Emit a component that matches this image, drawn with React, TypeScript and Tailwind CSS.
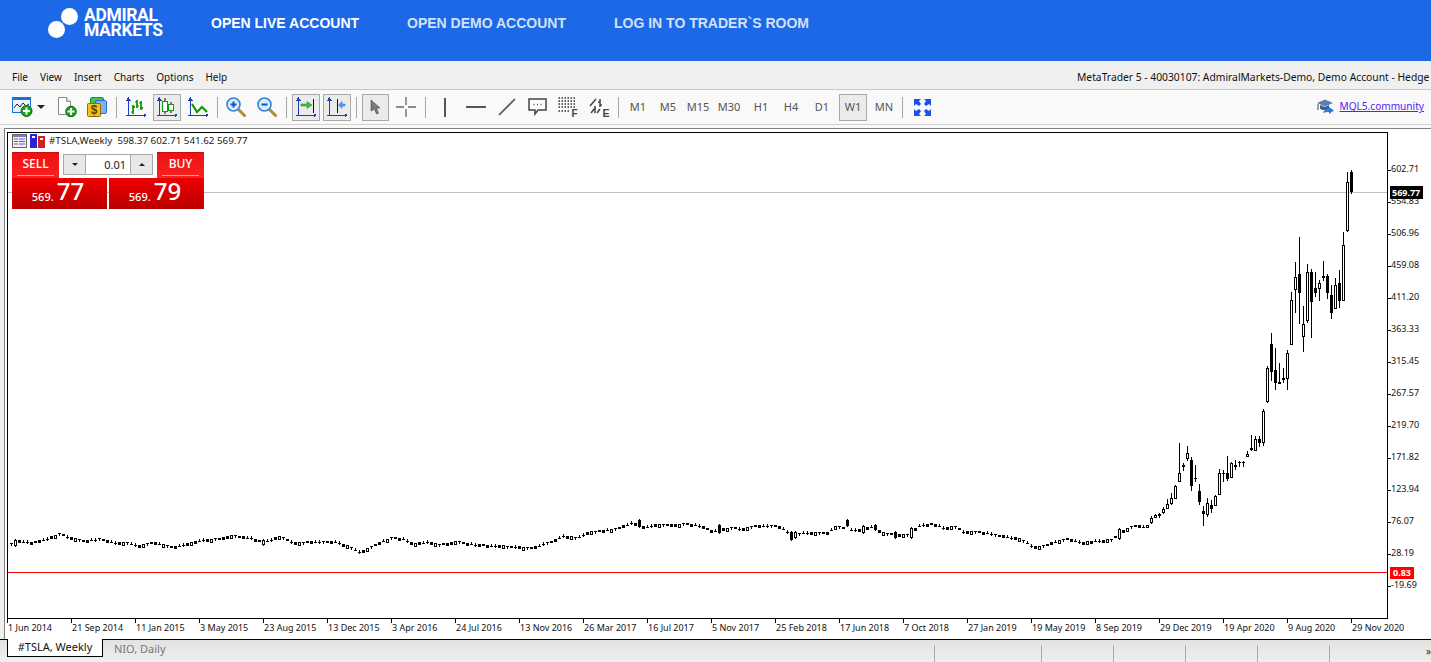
import type { ReactNode } from "react";

// [col, wickTop, wickBottom, bodyTop, bodyBottom, filled]
type Candle = [number, number, number, number, number, number];

const bigCandles: Candle[] = [
  [1147, 525, 528, 525, 528, 0],
  [1151, 516, 524, 518, 523, 0],
  [1155, 514, 518, 515, 518, 0],
  [1159, 513, 518, 514, 516, 1],
  [1163, 507, 514, 509, 513, 0],
  [1167, 499, 509, 504, 509, 0],
  [1171, 493, 505, 498, 504, 0],
  [1175, 485, 499, 486, 499, 0],
  [1179, 443, 482, 473, 482, 0],
  [1183, 463, 471, 465, 467, 1],
  [1187, 446, 461, 453, 459, 0],
  [1191, 457, 491, 460, 486, 1],
  [1195, 465, 482, 478, 479, 1],
  [1199, 484, 505, 491, 502, 1],
  [1203, 506, 526, 511, 514, 1],
  [1207, 498, 517, 503, 515, 0],
  [1211, 500, 513, 505, 509, 1],
  [1215, 495, 506, 496, 506, 0],
  [1219, 469, 495, 473, 495, 0],
  [1223, 470, 482, 473, 474, 1],
  [1227, 456, 481, 473, 479, 1],
  [1231, 462, 478, 463, 478, 0],
  [1235, 460, 470, 465, 467, 1],
  [1239, 461, 467, 462, 463, 1],
  [1243, 461, 467, 462, 463, 1],
  [1247, 451, 457, 454, 457, 0],
  [1251, 435, 451, 448, 450, 1],
  [1255, 436, 451, 439, 451, 0],
  [1259, 436, 447, 439, 443, 1],
  [1263, 409, 446, 411, 443, 0],
  [1267, 366, 403, 368, 402, 0],
  [1271, 333, 381, 344, 372, 1],
  [1275, 348, 390, 370, 383, 1],
  [1279, 363, 384, 382, 384, 0],
  [1283, 368, 383, 378, 380, 1],
  [1287, 350, 390, 353, 379, 0],
  [1291, 292, 345, 300, 345, 0],
  [1295, 262, 313, 277, 290, 0],
  [1299, 237, 324, 274, 293, 1],
  [1303, 306, 352, 324, 337, 0],
  [1307, 264, 323, 272, 321, 0],
  [1311, 269, 338, 272, 302, 1],
  [1315, 272, 297, 288, 293, 1],
  [1319, 280, 301, 283, 289, 0],
  [1323, 261, 281, 276, 278, 1],
  [1327, 274, 299, 276, 293, 1],
  [1331, 285, 319, 295, 313, 1],
  [1335, 278, 309, 285, 309, 0],
  [1339, 270, 308, 283, 301, 1],
  [1343, 232, 301, 245, 301, 0],
  [1347, 172, 232, 182, 231, 0],
  [1351, 170, 194, 172, 192, 1],
];

const path: [number, number][] = [
  [8, 545], [20, 541], [30, 543], [43, 540], [60, 534], [70, 538], [83, 541], [100, 539], [117, 543], [127, 543],
  [137, 546], [153, 543], [173, 547], [183, 545], [197, 541], [220, 539], [233, 536], [250, 538], [263, 542],
  [280, 537], [293, 543], [317, 542], [337, 542], [360, 552], [380, 542], [392, 538], [403, 539], [412, 544],
  [427, 542], [440, 545], [457, 542], [477, 545], [513, 547], [532, 548], [553, 541], [562, 536], [577, 538],
  [587, 533], [600, 531], [617, 529], [633, 522], [640, 528], [657, 525], [677, 525], [687, 524], [700, 526],
  [712, 531], [730, 528], [743, 529], [757, 526], [777, 526], [793, 535], [803, 533], [827, 533], [837, 526],
  [850, 530], [863, 530], [870, 526], [883, 533], [897, 535], [910, 535], [917, 526], [933, 524], [943, 528],
  [957, 527], [963, 532], [980, 532], [1000, 536], [1020, 539], [1033, 547], [1040, 547], [1057, 541],
  [1067, 539], [1083, 543], [1097, 541], [1112, 540], [1119, 533], [1133, 526], [1147, 527],
];

const tallOnes: Record<number, [number, number, number]> = {
  15: [540, 546, 0],
  263: [540, 545, 0],
  639: [520, 527, 1],
  719: [525, 533, 1],
  791: [532, 540, 1],
  795: [532, 538, 0],
  847: [520, 526, 1],
  863: [526, 533, 0],
  875: [525, 530, 1],
  895: [532, 538, 1],
  911: [528, 538, 0],
  1119: [529, 539, 0],
};

function yAt(x: number) {
  for (let i = 1; i < path.length; i++) {
    if (x <= path[i][0]) {
      const [x0, y0] = path[i - 1];
      const [x1, y1] = path[i];
      return Math.round(y0 + ((y1 - y0) * (x - x0)) / (x1 - x0));
    }
  }
  return 527;
}

function smallCandles() {
  const out: Candle[] = [];
  for (let x = 11; x < 1147; x += 4) {
    const y = yAt(x);
    const tall = tallOnes[x];
    if (tall) {
      out.push([x, tall[0] - 1, tall[1] + 1, tall[0], tall[1], tall[2]]);
      continue;
    }
    const kind = ((x >> 2) * 37 + (x >> 5) * 11) % 7;
    if (kind === 0 || kind === 1) out.push([x, y - 1, y + 2, y - 1, y + 2, 1]);
    else if (kind === 2) out.push([x, y - 1, y + 3, y - 1, y + 3, 0]);
    else if (kind === 3) out.push([x, y - 2, y + 1, y, y + 1, 1]);
    else if (kind === 4) out.push([x, y - 1, y + 2, y - 1, y, 1]);
    else if (kind === 5) out.push([x, y - 2, y + 2, y, y + 1, 1]);
    else out.push([x, y - 1, y + 1, y - 1, y + 1, 1]);
  }
  return out;
}

const candles = [...smallCandles(), ...bigCandles];

const priceLabels = ["602.71", "554.83", "506.96", "459.08", "411.20", "363.33", "315.45", "267.57", "219.70", "171.82", "123.94", "76.07", "28.19", "-19.69"];
const timeLabels = ["1 Jun 2014", "21 Sep 2014", "11 Jan 2015", "3 May 2015", "23 Aug 2015", "13 Dec 2015", "3 Apr 2016", "24 Jul 2016", "13 Nov 2016", "26 Mar 2017", "16 Jul 2017", "5 Nov 2017", "25 Feb 2018", "17 Jun 2018", "7 Oct 2018", "27 Jan 2019", "19 May 2019", "8 Sep 2019", "29 Dec 2019", "19 Apr 2020", "9 Aug 2020", "29 Nov 2020"];

const navy = "#1b3fb8";
const green = "#0c9a0c";

function PriceChart() {
  return (
    <svg width="1426" height="510" viewBox="5 129 1426 510" className="block font-['Noto_Sans',sans-serif] text-[9px]">
      <g shapeRendering="crispEdges">
        <rect x="7" y="132" width="1380" height="486" fill="none" stroke="#000" strokeWidth="1" transform="translate(0.5 0.5)" />
        <rect x="8" y="192" width="1379" height="1" fill="#c0c0c0" />
        <rect x="8" y="572" width="1379" height="1" fill="#ff0000" />
        {priceLabels.map((_, i) => (
          <rect key={i} x="1388" y={170 + i * 32} width="3" height="1" fill="#000" />
        ))}
        {timeLabels.map((_, i) => (
          <rect key={i} x={7 + i * 64} y="619" width="1" height="4" fill="#000" />
        ))}
        {candles.map(([x, top, bottom, bodyTop, bodyBottom, filled], i) => (
          <g key={i}>
            <rect x={x} y={top} width="1" height={bottom - top} fill="#000" />
            {bodyBottom - bodyTop < 3 || filled ? (
              <rect x={x - 1} y={bodyTop} width="3" height={Math.max(bodyBottom - bodyTop, 1)} fill="#000" />
            ) : (
              <rect x={x - 0.5} y={bodyTop + 0.5} width="2" height={bodyBottom - bodyTop - 1} fill="#fff" stroke="#000" strokeWidth="1" />
            )}
          </g>
        ))}
        <rect x="1390" y="186" width="33" height="13" fill="#000" />
        <rect x="1390" y="567" width="24" height="12" fill="#ff0000" />
      </g>
      {priceLabels.map((label, i) => (
        <text key={label} x="1391" y={172 + i * 32} fill="#111">
          {label}
        </text>
      ))}
      <text x="1392" y="196" fill="#fff" fontWeight="700">569.77</text>
      <text x="1393" y="576" fill="#fff" fontWeight="700">0.83</text>
      {timeLabels.map((label, i) => (
        <text key={label} x={8 + i * 64} y="631" fill="#111">
          {label}
        </text>
      ))}
    </svg>
  );
}

function Axes() {
  return (
    <g stroke={navy} fill="none" shapeRendering="crispEdges">
      <path d="M2.5 1v18M0 18.5h20" />
      <path d="M1 3l1.5-2 1.5 2zM18 17l2 1.5-2 1.5z" fill={navy} />
    </g>
  );
}

const BarsIcon = () => (
  <svg width="20" height="20" viewBox="0 0 20 20">
    <Axes />
    <path d="M7 8v9M5.500 15H7M7 10h2M11 3v8M9.500 5H11M11 9h1.500M15 4v9M13.500 6H15M15 11h2" stroke={green} strokeWidth="1.800" fill="none" />
  </svg>
);

const CandleIcon = () => (
  <svg width="20" height="20" viewBox="0 0 20 20">
    <Axes />
    <path d="M8 1v16M14 5v11" stroke="#111" fill="none" />
    <rect x="5.500" y="4.500" width="5" height="10" fill="#fff" stroke={green} />
    <rect x="11.500" y="7.500" width="5" height="6" fill="#fff" stroke={green} />
  </svg>
);

const LineIcon = () => (
  <svg width="20" height="20" viewBox="0 0 20 20">
    <Axes />
    <path d="M4 7l5 8 5-5 5 5" stroke={green} strokeWidth="2.200" fill="none" />
  </svg>
);

const NewChartIcon = () => (
  <svg width="21" height="20" viewBox="0 0 21 20">
    <rect x="0.500" y="0.500" width="18" height="15" fill="#e8f2fd" stroke="#1d6fd6" />
    <rect x="1" y="1" width="17" height="2" fill="#1d6fd6" />
    <path d="M2 11l3-4 3 3 3-4 3 3 3-2" stroke="#222" fill="none" />
    <circle cx="14.500" cy="14" r="5.500" fill="#19a319" stroke="#0b6b0b" />
    <path d="M14.500 10.500v7M11 14h7" stroke="#fff" strokeWidth="2" />
  </svg>
);

const DocIcon = () => (
  <svg width="20" height="20" viewBox="0 0 20 20">
    <path d="M1.500 0.500h8l4 4v13h-12z" fill="#fff" stroke="#8a8a8a" />
    <path d="M9.500 0.500v4h4" fill="#e4e4e4" stroke="#8a8a8a" />
    <circle cx="14" cy="14.500" r="5.300" fill="#19a319" stroke="#0b6b0b" />
    <path d="M14 11v7M10.500 14.500h7" stroke="#fff" strokeWidth="2" />
  </svg>
);

const MoneyIcon = () => (
  <svg width="21" height="20" viewBox="0 0 21 20">
    <rect x="3.500" y="0.500" width="13" height="11" rx="1.500" fill="#3fbf5f" stroke="#1f8f3f" />
    <rect x="8.500" y="3.500" width="11" height="13" rx="1.500" fill="#7fb2ee" stroke="#2a6fc8" />
    <rect x="0.500" y="6.500" width="13" height="13" rx="1" fill="#f4c21b" stroke="#8f6d05" />
    <text x="7" y="17" textAnchor="middle" fontSize="12" fontWeight="700" fill="#5a4300" fontFamily="Liberation Sans">$</text>
  </svg>
);

const Magnifier = ({ plus }: { plus?: boolean }) => (
  <svg width="20" height="20" viewBox="0 0 20 20">
    <path d="M12 12l6.500 6.500" stroke="#b48a35" strokeWidth="3" strokeLinecap="round" />
    <circle cx="7.500" cy="7.500" r="6.500" fill="#d6ecff" stroke="#2f86d8" strokeWidth="1.600" />
    <path d={plus ? "M7.500 4.500v6M4.500 7.500h6" : "M4.500 7.500h6"} stroke="#1752b8" strokeWidth="2" />
  </svg>
);

const ScrollIcon = () => (
  <svg width="20" height="20" viewBox="0 0 20 20">
    <Axes />
    <path d="M17.500 2v14" stroke="#111" />
    <path d="M5 7h6V4.500l5 3.500-5 3.500V9H5z" fill="#35c235" stroke="#1a8f1a" strokeWidth="0.500" />
  </svg>
);

const ShiftIcon = () => (
  <svg width="20" height="20" viewBox="0 0 20 20">
    <Axes />
    <path d="M10.500 2v14" stroke="#111" />
    <path d="M18 7h-3V4.500L11.500 8l3.500 3.500V9h3z" fill="#4f9cf2" stroke="#2a6fc8" strokeWidth="0.500" />
  </svg>
);

const CursorIcon = () => (
  <svg width="12" height="16" viewBox="0 0 12 16">
    <path d="M1 1l9 8H6.500l2 5-2 1-2-5L1 12z" fill="#7a7a7a" stroke="#444" strokeWidth="0.600" />
  </svg>
);

const CrossIcon = () => (
  <svg width="20" height="20" viewBox="0 0 20 20">
    <path d="M0 10h8M12 10h8M10 0v8M10 12v8" stroke="#666" strokeWidth="1.300" />
  </svg>
);

const VLineIcon = () => <div className="w-[2px] h-[19px] bg-[#555]" />;
const HLineIcon = () => <div className="w-[20px] h-[2px] bg-[#555]" />;

const TrendIcon = () => (
  <svg width="18" height="18" viewBox="0 0 18 18">
    <path d="M1 17L17 1" stroke="#555" strokeWidth="1.700" />
  </svg>
);

const CommentIcon = () => (
  <svg width="19" height="18" viewBox="0 0 19 18">
    <path d="M1 1h17v11h-8l-3 4v-4H1z" fill="#fff" stroke="#444" strokeWidth="1.500" />
    <path d="M5.500 6.500h1M9 6.500h1M12.500 6.500h1" stroke="#444" strokeWidth="1.500" />
  </svg>
);

const GridFIcon = () => (
  <svg width="20" height="20" viewBox="0 0 20 20">
    <path d="M0.500 1h18M0.500 4h18M0.500 7h18M0.500 10h18M0.500 14h11" stroke="#333" strokeWidth="1.500" strokeDasharray="1.500 1.500" />
    <text x="13.500" y="19.500" fontSize="10" fontWeight="700" fill="#444" fontFamily="Liberation Sans">F</text>
  </svg>
);

const GridEIcon = () => (
  <svg width="21" height="20" viewBox="0 0 21 20">
    <path d="M1 9l6-7M2 16l4-5M11 12l-3 4" stroke="#444" strokeWidth="1.500" />
    <path d="M11 2v8M9 5h2M11 8h2M6 9v7" stroke="#444" strokeWidth="1.500" />
    <text x="13.500" y="19.500" fontSize="10.500" fontWeight="700" fill="#444" fontFamily="Liberation Sans">E</text>
  </svg>
);

const FullscreenIcon = () => (
  <svg width="17" height="17" viewBox="0 0 17 17">
    <path d="M0 0h7L5 2l2 3-2 2-3-2-2 2zM17 0h-7l2 2-2 3 2 2 3-2 2 2zM0 17h7l-2-2 2-3-2-2-3 2-2-2zM17 17h-7l2-2-2-3 2-2 3 2 2-2z" fill="#1c4ff0" />
  </svg>
);

const CapIcon = () => (
  <svg width="17" height="16" viewBox="0 0 17 16">
    <path d="M0 4l8-3.500L16 4 8 7.500z" fill="#5b7fb0" />
    <path d="M3 6v3.500c2 2 7 2 9 0V6L8 8z" fill="#3c5f92" />
    <path d="M1 5v6" stroke="#444" />
    <path d="M6 14c1-3 3-4 6-4V8l5 3.500-5 3.500v-2c-2 0-4 0-6 1z" fill="#1f7fe0" />
  </svg>
);

function Sep({ className }: { className: string }) {
  return <div className={`w-[1px] h-[21px] bg-[#a8a8a8] shrink-0 ${className}`} />;
}

function Btn({ className, active, children }: { className: string; active?: boolean; children: ReactNode }) {
  return (
    <div
      className={`h-[27px] shrink-0 flex items-center justify-center text-[11px] text-[#555] ${active ? "bg-[#ebebeb] border border-[#a8a8a8]" : ""} ${className}`}
    >
      {children}
    </div>
  );
}

function Toolbar() {
  return (
    <div className="h-[35px] bg-[#f9f9f9] border-b border-[#d2d2d2] pl-[7px] pr-[7px] flex items-center">
      <Btn className="w-[30px]"><NewChartIcon /></Btn>
      <div className="w-[8px] shrink-0 flex justify-center">
        <div className="border-x-[4px] border-x-transparent border-t-[4px] border-t-[#222]" />
      </div>
      <Btn className="w-[30px] ml-[7px]"><DocIcon /></Btn>
      <Btn className="w-[31px]"><MoneyIcon /></Btn>
      <Sep className="ml-[3px]" />
      <Btn className="w-[30px] ml-[4px]"><BarsIcon /></Btn>
      <Btn active className="w-[28px] ml-[2px]"><CandleIcon /></Btn>
      <Btn className="w-[30px] ml-[2px]"><LineIcon /></Btn>
      <Sep className="ml-[4px]" />
      <Btn className="w-[30px] ml-[3px]"><Magnifier plus /></Btn>
      <Btn className="w-[30px] ml-[1px]"><Magnifier /></Btn>
      <Sep className="ml-[4px]" />
      <Btn active className="w-[28px] ml-[5px]"><ScrollIcon /></Btn>
      <Btn active className="w-[28px] ml-[3px]"><ShiftIcon /></Btn>
      <Sep className="ml-[5px]" />
      <Btn active className="w-[27px] ml-[5px]"><CursorIcon /></Btn>
      <Btn className="w-[30px] ml-[2px]"><CrossIcon /></Btn>
      <Sep className="ml-[4px]" />
      <Btn className="w-[30px] ml-[4px]"><VLineIcon /></Btn>
      <Btn className="w-[30px] ml-[1px]"><HLineIcon /></Btn>
      <Btn className="w-[30px] ml-[1px]"><TrendIcon /></Btn>
      <Btn className="w-[30px]"><CommentIcon /></Btn>
      <Btn className="w-[30px] ml-[1px]"><GridFIcon /></Btn>
      <Btn className="w-[30px] ml-[1px]"><GridEIcon /></Btn>
      <Sep className="ml-[4px]" />
      <Btn className="w-[30px] ml-[4px]">M1</Btn>
      <Btn className="w-[30px]">M5</Btn>
      <Btn className="w-[30px]">M15</Btn>
      <Btn className="w-[30px] ml-[1px]">M30</Btn>
      <Btn className="w-[30px] ml-[2px]">H1</Btn>
      <Btn className="w-[30px]">H4</Btn>
      <Btn className="w-[30px] ml-[1px]">D1</Btn>
      <Btn active className="w-[28px] ml-[2px]">W1</Btn>
      <Btn className="w-[30px] ml-[2px]">MN</Btn>
      <Sep className="ml-[3px]" />
      <Btn className="w-[30px] ml-[4px]"><FullscreenIcon /></Btn>
      <div className="ml-auto flex items-center gap-[5px]">
        <CapIcon />
        <a className="text-[10.100px] text-[#5a1cf5] underline">MQL5.community</a>
      </div>
    </div>
  );
}

function PriceBlock({ small, big }: { small: string; big: string }) {
  return (
    <div className="w-[95px] bg-gradient-to-b from-[#ee0000] to-[#bb0000] flex items-center justify-center gap-[3px] pr-[3px]">
      <span className="text-[11px] font-medium mt-[8px]">{small}</span>
      <span className="text-[24px] font-medium leading-[24px] -mt-[5px]">{big}</span>
    </div>
  );
}

function TradeLabel({ text }: { text: string }) {
  return (
    <div className="w-[47px] bg-gradient-to-b from-[#f01010] to-[#f82020] border-t border-[#c01010] flex flex-col items-center">
      <span className="text-[12px] font-medium leading-[22px]">{text}</span>
      <div className="w-[37px] h-[1px] bg-[#ff9a9a]" />
    </div>
  );
}

function TradePanel() {
  return (
    <div className="absolute left-[7px] top-[23px] w-[192px] text-white">
      <div className="flex h-[26px]">
        <TradeLabel text="SELL" />
        <div className="w-[98px] bg-white flex items-center px-[4px] pb-[1px] text-[#222]">
          <div className="w-[23px] h-[21px] bg-[#e8e8e8] border border-[#a8a8a8] flex items-center justify-center">
            <div className="border-x-[3px] border-x-transparent border-t-[3px] border-t-[#222]" />
          </div>
          <div className="w-[44px] h-[21px] border-y border-[#a8a8a8] text-[11px] leading-[19px] text-right pr-[4px]">0.01</div>
          <div className="w-[23px] h-[21px] bg-[#e8e8e8] border border-[#a8a8a8] flex items-center justify-center">
            <div className="border-x-[3px] border-x-transparent border-b-[3px] border-b-[#222]" />
          </div>
        </div>
        <TradeLabel text="BUY" />
      </div>
      <div className="flex gap-[2px] h-[31px]">
        <PriceBlock small="569." big="77" />
        <PriceBlock small="569." big="79" />
      </div>
    </div>
  );
}

function SymbolLine() {
  return (
    <div className="absolute left-[7px] top-[5px] flex items-center h-[14px] text-[9.800px] text-[#222]">
      <svg width="15" height="14" viewBox="0 0 15 14">
        <rect x="0.500" y="0.500" width="14" height="13" fill="#eef" stroke="#666" />
        <rect x="1" y="1" width="13" height="2" fill="#7a7ad0" />
        <path d="M2 5h4M2 7.500h4M2 10h4" stroke="#d04040" strokeWidth="1.200" />
        <path d="M7 5h6M7 7.500h6M7 10h6" stroke="#5a5ad0" strokeWidth="1.200" />
      </svg>
      <svg width="15" height="14" viewBox="0 0 15 14" className="ml-[3px]">
        <rect x="0" y="0" width="7" height="14" fill="#2a20d8" />
        <rect x="8" y="2" width="7" height="12" fill="#d02020" />
        <rect x="2" y="2" width="3" height="2" fill="#fff" />
        <rect x="10" y="4" width="3" height="2" fill="#fff" />
      </svg>
      <span className="ml-[4px] whitespace-pre">#TSLA,Weekly  598.37 602.71 541.62 569.77</span>
    </div>
  );
}

export default function App() {
  return (
    <div className="w-[1431px] h-[662px] overflow-hidden flex flex-col bg-[#f0f0f0] font-['Noto_Sans',sans-serif]">
      <header className="h-[61px] shrink-0 bg-[#1d68e7] flex items-start">
        <div className="relative w-[211px] h-[61px] shrink-0 pl-[48px] pt-[8px] flex">
          <div className="w-[36px] h-[32px] relative shrink-0">
            <div className="absolute right-[6px] top-0 w-[17px] h-[17px] rounded-full bg-white" />
            <div className="absolute left-0 top-[13px] w-[17px] h-[17px] rounded-full bg-white" />
          </div>
          <div className="font-['Roboto',sans-serif] font-bold text-white text-[17.500px] leading-[15px] tracking-[-0.35px]">
            ADMIRAL
            <br />
            MARKETS
          </div>
        </div>
        <nav className="flex gap-[48px] h-[46px] items-center font-['Liberation_Sans',sans-serif] font-bold text-[14px] whitespace-nowrap">
          <a className="text-white">OPEN LIVE ACCOUNT</a>
          <a className="text-[#d2e1fa]">OPEN DEMO ACCOUNT</a>
          <a className="text-[#d2e1fa]">LOG IN TO TRADER`S ROOM</a>
        </nav>
      </header>

      <div className="h-[29px] shrink-0 bg-[#f0f0f0] border-b border-[#c8c8c8] flex items-center pl-[12px] pt-[5px] text-[10px] text-[#111] gap-[12px]">
        <span>File</span>
        <span>View</span>
        <span>Insert</span>
        <span>Charts</span>
        <span>Options</span>
        <span>Help</span>
        <span className="ml-auto w-[354px] text-[10.300px] overflow-hidden whitespace-nowrap">MetaTrader 5 - 40030107: AdmiralMarkets-Demo, Demo Account - Hedge</span>
      </div>

      <Toolbar />
      <div className="h-[3px] shrink-0 bg-[#f9f9f9]" />

      <section className="relative h-[511px] shrink-0 ml-[4px] bg-white border-l border-t border-[#808080]">
        <PriceChart />
        <SymbolLine />
        <TradePanel />
      </section>

      <footer className="h-[23px] shrink-0 border-t border-black bg-gradient-to-b from-[#e2e2e2] to-[#efefef] flex items-start relative pl-[7px] text-[11px]">
        <div className="w-[96px] h-[18px] -mt-[1px] bg-white border-x border-b border-black flex items-center justify-center text-[#111]">#TSLA, Weekly</div>
        <div className="ml-[11px] h-[18px] flex items-center text-[#777]">NIO, Daily</div>
        <div className="absolute left-[934px] top-[5px] bottom-0 w-[1px] bg-[#aaa]" />
        <div className="absolute left-[1041px] top-[5px] bottom-0 w-[1px] bg-[#aaa]" />
        <div className="absolute left-[1113px] top-[5px] bottom-0 w-[1px] bg-[#aaa]" />
        <div className="absolute left-[1185px] top-[5px] bottom-0 w-[1px] bg-[#aaa]" />
        <div className="absolute left-[1257px] top-[5px] bottom-0 w-[1px] bg-[#aaa]" />
        <div className="absolute left-[1329px] top-[5px] bottom-0 w-[1px] bg-[#aaa]" />
        <span className="absolute left-[1426px] top-[4px] text-[10px] leading-[14px] text-[#602020]">»</span>
      </footer>
    </div>
  );
}
